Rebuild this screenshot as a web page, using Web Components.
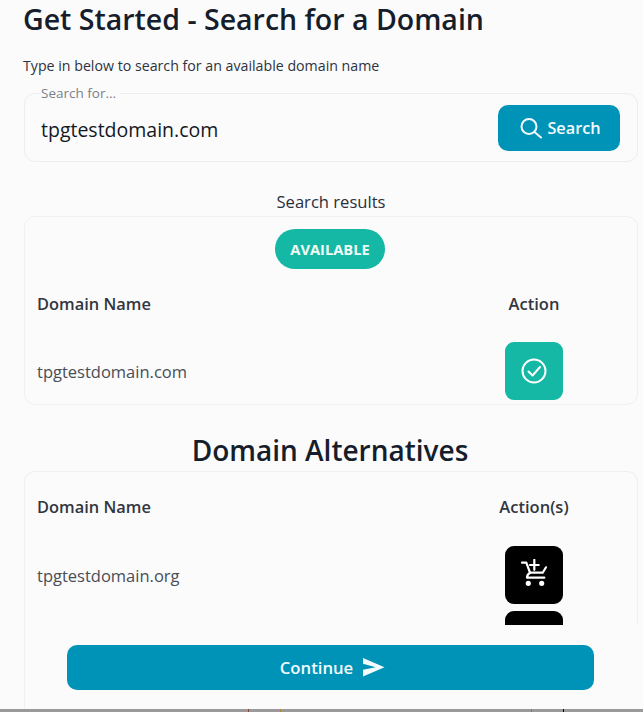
<!DOCTYPE html>
<html>
<head>
<meta charset="utf-8">
<title>Get Started</title>
<style>
  html, body { margin: 0; height: 712px; overflow: hidden; background: #fbfbfc; }
  body { font-family: "Open Sans", "Noto Sans", sans-serif; color: #1b2230; position: relative; }
</style>
</head>
<body>
<domain-page></domain-page>

<script>
const icons = {
  blank: "",
  search: `<svg width="22" height="22" viewBox="0 0 22 22" fill="none" stroke="currentColor" stroke-width="2" stroke-linecap="round"><circle cx="9" cy="9.500" r="7.500"/><path d="M14.500 15L21 20.500"/></svg>`,
  check: `<svg width="26" height="26" viewBox="0 0 26 26" fill="none" stroke="currentColor" stroke-width="2" stroke-linecap="round" stroke-linejoin="round"><circle cx="13" cy="13" r="11.500"/><path d="M7.500 13.500l4 4 7.500-8.500"/></svg>`,
  cart: `<svg width="28" height="28" viewBox="0 0 28 28" fill="none" stroke="currentColor" stroke-width="2.200" stroke-linecap="round" stroke-linejoin="round" style="margin-top:-4px"><path d="M2 3.700h4.300L10 13.700h12.700L26 8.300"/><path d="M10 13.700Q7 15.500 7 18.700h17.300"/><path d="M14.300 .8v10M10 6h8.700"/><circle cx="8.300" cy="24.300" r="1.500" fill="currentColor"/><circle cx="21.700" cy="24.300" r="1.500" fill="currentColor"/></svg>`,
  send: `<svg width="22" height="19" viewBox="0 0 22 19" fill="currentColor"><path d="M0 0L21.500 9.300 0 18.500V11.800L12.700 9.300 0 5.700Z"/></svg>`
};

const pageTemplate = document.createElement("template");
pageTemplate.innerHTML = `
  <style>
    :host { display: block; height: 712px; box-sizing: border-box; padding: 0 5px 0 24px; overflow: hidden; }
    h1 { font-size: 28.500px; font-weight: 600; line-height: 38px; margin: 0 0 0 -1px; color: #161d2b; white-space: nowrap; }
    .lead { font-size: 14.200px; line-height: 20px; margin: 18px 0 0 -1px; color: #2d3340; }
    .sub { text-align: center; font-size: 16.600px; font-weight: 500; line-height: 22px; margin: 29px 0 3px; color: #2a2f3b; }
    h2 { text-align: center; font-size: 28px; font-weight: 600; line-height: 38px; margin: 26px 2px 2px 0; color: #161d2b; }
    .pill-row { display: flex; justify-content: center; padding: 12px 2px 0 0; }
  </style>
  <h1>Get Started - Search for a Domain</h1>
  <p class="lead">Type in below to search for an available domain name</p>
  <search-box label="Search for..." value="tpgtestdomain.com"></search-box>
  <div class="sub">Search results</div>
  <result-card>
    <div class="pill-row" slot="top"><status-pill>AVAILABLE</status-pill></div>
    <table-head action="Action"></table-head>
    <domain-row name="tpgtestdomain.com" icon="check" tone="teal"></domain-row>
  </result-card>
  <h2>Domain Alternatives</h2>
  <result-card open-bottom>
    <table-head action="Action(s)" tall></table-head>
    <domain-row name="tpgtestdomain.org" icon="cart" tone="black"></domain-row>
    <domain-row icon="blank" tone="black"></domain-row>
  </result-card>
  <continue-bar>Continue</continue-bar>
`;

class DomainPage extends HTMLElement {
  constructor() {
    super();
    this.attachShadow({mode: "open"});
    this.shadowRoot.appendChild(pageTemplate.content.cloneNode(true));
  }
}

class SearchBox extends HTMLElement {
  constructor() {
    super();
    this.attachShadow({mode: "open"});
    this.shadowRoot.innerHTML = `
      <style>
        :host { display: block; margin-top: 8px; }
        fieldset { margin: 0; padding: 3px 17px 0 16px; height: 78px; box-sizing: border-box; border: 1px solid #ebedf0; border-radius: 11px; }
        legend { font-size: 13.500px; line-height: 18px; color: #7b8088; padding: 0 4px 0 0; }
        .wrap { display: flex; align-items: center; justify-content: space-between; height: 46px; }
        .val { font-size: 19.500px; color: #14181f; padding-top: 2px; }
        button { width: 122px; height: 46px; border: 0; border-radius: 10px; background: #0093b8; color: #f4fbfd;
          font: 600 16.300px "Open Sans", sans-serif; display: flex; align-items: center; justify-content: center; gap: 5px; padding: 0 0 0 3px; }
      </style>
      <fieldset>
        <legend>${this.getAttribute("label")}</legend>
        <div class="wrap">
          <span class="val">${this.getAttribute("value")}</span>
          <button>${icons.search}<span>Search</span></button>
        </div>
      </fieldset>`;
  }
}

class ResultCard extends HTMLElement {
  constructor() {
    super();
    this.attachShadow({mode: "open"});
    this.shadowRoot.innerHTML = `
      <style>
        :host { display: block; border: 1px solid #eff0f2; border-radius: 11px; box-sizing: border-box; }
        :host([open-bottom]) { border-bottom: 0; border-radius: 11px 11px 0 0; min-height: 238px; }
      </style>
      <slot name="top"></slot>
      <slot></slot>`;
  }
}

class StatusPill extends HTMLElement {
  constructor() {
    super();
    this.attachShadow({mode: "open"});
    this.shadowRoot.innerHTML = `
      <style>
        :host { display: flex; align-items: center; justify-content: center; width: 110px; height: 40px; border-radius: 20px;
          background: #14b8a4; color: #f0fbf9; font-size: 14.700px; font-weight: 700; }
      </style>
      <slot></slot>`;
  }
}

class TableHead extends HTMLElement {
  constructor() {
    super();
    this.attachShadow({mode: "open"});
    this.shadowRoot.innerHTML = `
      <style>
        :host { display: grid; grid-template-columns: 1fr 200px; align-items: center; height: 68px; padding: 0 3px 2px 12px;
          font-size: 16.400px; font-weight: 600; color: #32363f; }
        :host([tall]) { height: 69px; }
        .act { text-align: center; font-size: 16.500px; }
      </style>
      <div>Domain Name</div><div class="act">${this.getAttribute("action")}</div>`;
  }
}

class DomainRow extends HTMLElement {
  constructor() {
    super();
    const tone = this.getAttribute("tone") === "teal" ? "#14b8a4" : "#000";
    this.attachShadow({mode: "open"});
    this.shadowRoot.innerHTML = `
      <style>
        :host { display: grid; grid-template-columns: 1fr 200px; align-items: center; padding: 0 3px 0 12px;
          font-size: 16.500px; color: #484d56; }
        .cell { display: flex; justify-content: center; padding: 3px 0 4px; }
        button { width: 58px; height: 58px; border: 0; border-radius: 9px; padding: 0; background: ${tone}; color: #fff;
          display: flex; align-items: center; justify-content: center; }
      </style>
      <div>${this.getAttribute("name") || ""}</div>
      <div class="cell"><button>${icons[this.getAttribute("icon")]}</button></div>`;
  }
}

class ContinueBar extends HTMLElement {
  constructor() {
    super();
    this.attachShadow({mode: "open"});
    this.shadowRoot.innerHTML = `
      <style>
        /* sticky footer, sits over the scrolled table */
        :host { position: absolute; left: 25px; right: 0; top: 625px; bottom: 0; background: #fbfbfc; }
        button { position: absolute; left: 42px; top: 20px; width: 527px; height: 45px; border: 0; border-radius: 10px; background: #0093b8; color: #f4fbfd;
          font: 600 16.700px "Open Sans", sans-serif; display: flex; align-items: center; justify-content: center; gap: 10px; padding: 0 0 0 4px; }
        .strip { position: absolute; left: -25px; right: 0; bottom: 0; height: 3px; background: #9a9a9a; }
        .strip i { position: absolute; top: 0; width: 1px; height: 3px; }
      </style>
      <button><slot></slot>${icons.send}</button>
      <div class="strip">
        <i style="left:248px;background:#8a4a2a"></i>
        <i style="left:280px;background:#b5843a"></i>
        <i style="left:531px;background:#a9743a"></i>
        <i style="left:563px;background:#000"></i>
      </div>`;
  }
}

customElements.define("search-box", SearchBox);
customElements.define("result-card", ResultCard);
customElements.define("status-pill", StatusPill);
customElements.define("table-head", TableHead);
customElements.define("domain-row", DomainRow);
customElements.define("continue-bar", ContinueBar);
customElements.define("domain-page", DomainPage);
</script>
</body>
</html>
